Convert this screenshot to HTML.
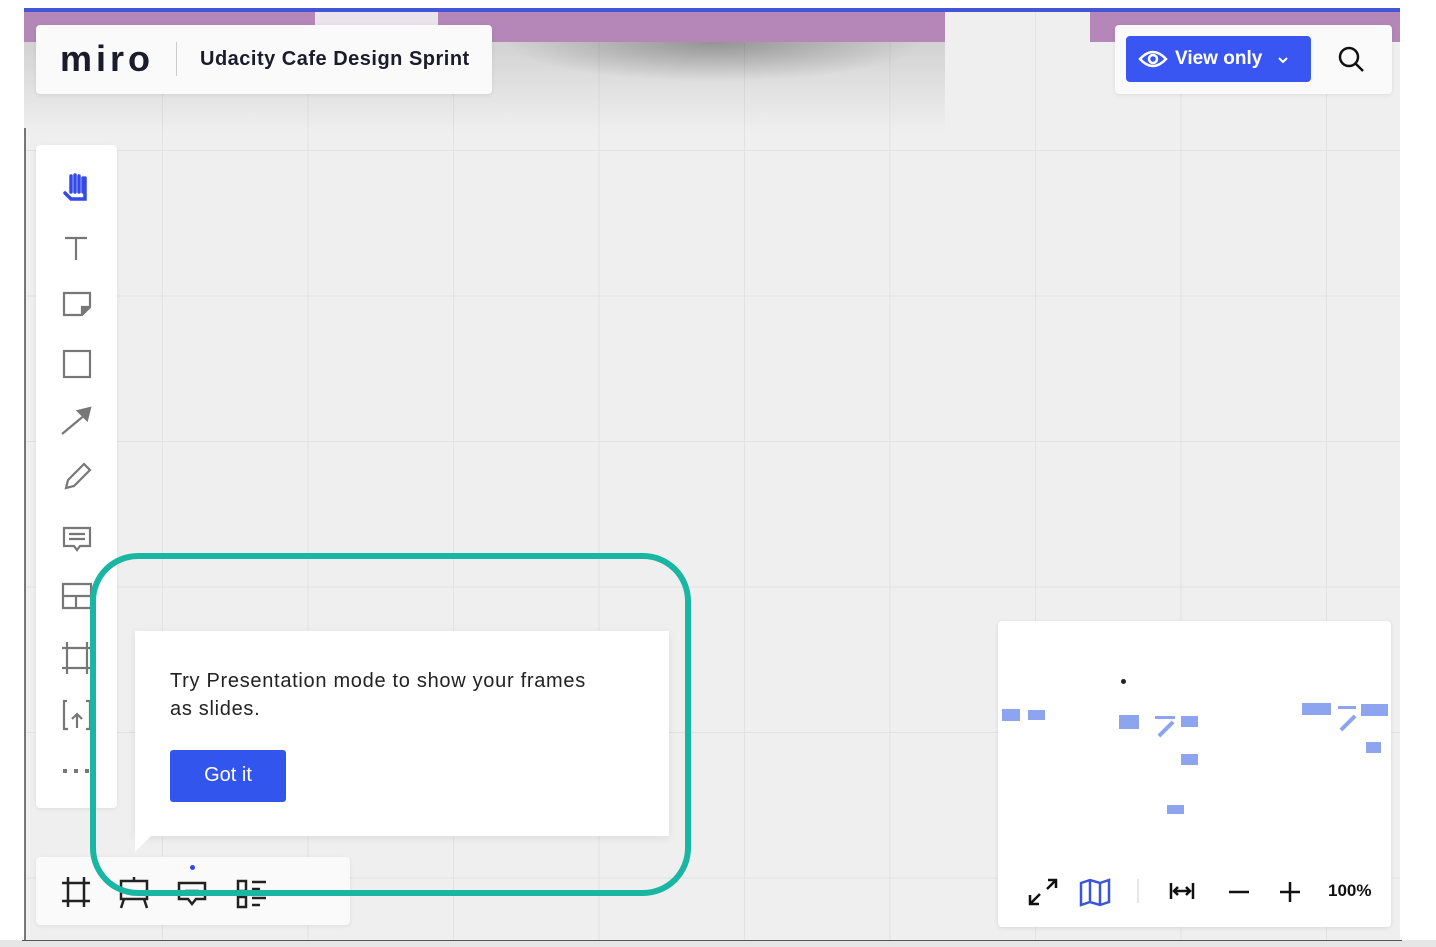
<!DOCTYPE html>
<html><head><meta charset="utf-8"><style>
*{margin:0;padding:0;box-sizing:border-box}
body{width:1436px;height:947px;position:relative;overflow:hidden;background:#fff;font-family:"Liberation Sans",sans-serif}
.abs{position:absolute}
#canvas{left:24px;top:8px;width:1376px;height:932px;background-color:#efefef;
background-image:linear-gradient(90deg,#e2e2e2 1px,transparent 1px),linear-gradient(#e2e2e2 1px,transparent 1px);
background-size:145.5px 145.5px;background-position:138px 142px;overflow:hidden}
.panel{background:#fafafa;border-radius:4px;box-shadow:0 1px 4px rgba(0,0,0,.08)}
svg{position:absolute}
</style></head><body>
<div class="abs" style="left:0;top:940px;width:1436px;height:7px;background:#e6e6e6"></div>
<div class="abs" style="left:22px;top:940px;width:1380px;height:1px;background:#555"></div>
<div id="canvas" class="abs">
  <div class="abs" style="left:0;top:34px;width:921px;height:90px;background:linear-gradient(rgba(0,0,0,.12),transparent)"></div>
  <div class="abs" style="left:0;top:0;width:1376px;height:4px;background:#4356d8"></div>
  <div class="abs" style="left:0;top:4px;width:921px;height:30px;background:#b487b8"></div>
  <div class="abs" style="left:291px;top:4px;width:123px;height:30px;background:#ebe3ec"></div>
  <div class="abs" style="left:1066px;top:4px;width:310px;height:30px;background:#b487b8"></div>
  <div class="abs" style="left:480px;top:34px;width:420px;height:40px;background:radial-gradient(ellipse at 50% 0%,rgba(0,0,0,.3),transparent 70%)"></div>
  <div class="abs" style="left:0;top:120px;width:2px;height:812px;background:#777"></div>
</div>
<!-- top left panel -->
<div class="abs panel" style="left:36px;top:25px;width:456px;height:69px"></div>
<div class="abs" style="left:60px;top:38px;font-size:36px;font-weight:bold;color:#1b1b2b;letter-spacing:4px">miro</div>
<div class="abs" style="left:176px;top:42px;width:1px;height:34px;background:#ccc"></div>
<div class="abs" style="left:200px;top:48px;font-size:20px;font-weight:bold;color:#1b1b2b;letter-spacing:0.5px">Udacity Cafe Design Sprint</div>
<!-- top right -->
<div class="abs panel" style="left:1115px;top:25px;width:277px;height:69px"></div>
<div class="abs" style="left:1126px;top:36px;width:185px;height:46px;background:#3956f2;border-radius:4px"></div>
<svg style="left:1138px;top:48px" width="30" height="22" viewBox="0 0 30 22"><path d="M2 11Q15 -3 28 11Q15 25 2 11Z" fill="none" stroke="#fff" stroke-width="2.5"/><circle cx="15" cy="11" r="4" fill="none" stroke="#fff" stroke-width="2.5"/></svg>
<div class="abs" style="left:1175px;top:48px;color:#fff;font-weight:bold;font-size:19px">View only</div>
<svg style="left:1277px;top:55px" width="12" height="10"><path d="M2 3l4 4 4-4" fill="none" stroke="#fff" stroke-width="2"/></svg>
<svg style="left:1337px;top:45px" width="30" height="30"><circle cx="12" cy="12" r="9" fill="none" stroke="#111" stroke-width="2.5"/><path d="M19 19l7 7" stroke="#111" stroke-width="2.5"/></svg>
<!-- left toolbar -->
<div class="abs panel" style="left:36px;top:145px;width:81px;height:663px;background:#fff"></div>
<svg style="left:58px;top:170px" width="40" height="620" viewBox="0 0 40 620" fill="none" stroke="#777" stroke-width="2.2">
<path d="M7 23l6 6h14v-8V8M13 22V6m4 16V5m4 17V6m4 16V8" stroke="#3349e8" stroke-width="3.5" stroke-linecap="round"/>
<path d="M7 68h22M18 68v22"/>
<path d="M6 123h26v14l-8 8H6z"/><path d="M24 145v-8h8" fill="#777"/>
<rect x="6" y="181" width="26" height="26"/>
<path d="M4 264l24-20"/><path d="M20 241l12-3-3 12z" fill="#777"/>
<path d="M8 318l2-8 16-16 6 6-16 16z"/>
<path d="M6 358h26v18H22l-3 4-3-4H6z"/><path d="M11 364h16M11 369h16"/>
<path d="M5 414h28v12H5zM5 426h28v12H5zM18 426v12"/>
<path d="M9 472v32M29 472v32M4 478h30M4 498h30"/>
<path d="M9 531h-3v28h4M28 531h4v28h-4M19 558v-14m-5 5l5-5 5 5"/>
<path d="M5 601h4M16 601h4M27 601h4" stroke-width="4"/>
</svg>
<!-- tooltip -->
<div class="abs" style="left:135px;top:631px;width:534px;height:205px;background:#fff;box-shadow:0 2px 8px rgba(0,0,0,.08)"></div>
<svg style="left:135px;top:834px" width="20" height="20"><path d="M0 0h18L0 18z" fill="#fff"/></svg>
<div class="abs" style="left:170px;top:667px;font-size:20px;line-height:28px;color:#222;letter-spacing:0.7px">Try Presentation mode to show your frames<br>as slides.</div>
<div class="abs" style="left:170px;top:750px;width:116px;height:52px;background:#3255ed;border-radius:3px;color:#fff;font-size:20px;text-align:center;line-height:50px">Got it</div>
<!-- bottom left -->
<div class="abs panel" style="left:36px;top:857px;width:314px;height:68px"></div>
<div class="abs" style="left:190px;top:865px;width:5px;height:5px;border-radius:50%;background:#3349e8"></div>
<svg style="left:58px;top:873px" width="220" height="38" fill="none" stroke="#222" stroke-width="2.5">
<path d="M10 4v30M26 4v30M4 10h28M4 28h28"/>
<path d="M63 8h26v18H63zM66 26l-3 9M86 26l3 9M76 4v4"/>
<path d="M121 10h26v16h-9l-4 5-4-5h-9zM127 18h14"/>
<path d="M180 8h8v10h-8zM180 24h8v10h-8zM194 9h14M194 16h8M194 25h14M194 32h8"/>
<path d="M250 16l4 4 4-4" stroke="#ccc" stroke-width="1.5"/>
</svg>
<!-- teal highlight -->
<div class="abs" style="left:90px;top:553px;width:601px;height:343px;border:6px solid #19b7a3;border-radius:48px"></div>
<!-- minimap -->
<div class="abs" style="left:998px;top:621px;width:393px;height:306px;background:#fff;border-radius:4px;box-shadow:0 1px 4px rgba(0,0,0,.1)"></div>
<div class="abs" style="left:1002px;top:709px;width:18px;height:12px;background:#8da4ef"></div>
<div class="abs" style="left:1028px;top:710px;width:17px;height:10px;background:#8da4ef"></div>
<div class="abs" style="left:1119px;top:715px;width:20px;height:14px;background:#8da4ef"></div>
<div class="abs" style="left:1181px;top:716px;width:17px;height:11px;background:#8da4ef"></div>
<div class="abs" style="left:1155px;top:716px;width:20px;height:3px;background:#8da4ef"></div>
<div class="abs" style="left:1156px;top:727px;width:20px;height:4px;background:#8da4ef;transform:rotate(-45deg)"></div>
<div class="abs" style="left:1181px;top:754px;width:17px;height:11px;background:#8da4ef"></div>
<div class="abs" style="left:1167px;top:805px;width:17px;height:9px;background:#8da4ef"></div>
<div class="abs" style="left:1302px;top:703px;width:29px;height:12px;background:#8da4ef"></div>
<div class="abs" style="left:1338px;top:706px;width:18px;height:3px;background:#8da4ef"></div>
<div class="abs" style="left:1361px;top:704px;width:27px;height:12px;background:#8da4ef"></div>
<div class="abs" style="left:1338px;top:721px;width:20px;height:4px;background:#8da4ef;transform:rotate(-45deg)"></div>
<div class="abs" style="left:1366px;top:742px;width:15px;height:11px;background:#8da4ef"></div>
<div class="abs" style="left:1121px;top:679px;width:5px;height:5px;background:#222;border-radius:50%"></div>
<svg style="left:1025px;top:875px" width="360" height="36" fill="none" stroke="#111" stroke-width="2.5">
<path d="M6 28l9-9M5 20v9h9M22 14l9-9M23 5h8v8"/>
<path d="M56 8l9-3 10 3 9-3v22l-9 3-10-3-9 3zM65 5v22M75 8v22" stroke="#3a55d8"/>
<path d="M113 4v24" stroke="#ccc" stroke-width="1"/>
<path d="M146 8v16M168 8v16M150 16h14M153 12l-4 4 4 4M161 12l4 4-4 4"/>
<path d="M204 17h20M255 17h20M265 7v20"/>
</svg>
<div class="abs" style="left:1328px;top:881px;font-size:17px;font-weight:bold;color:#111">100%</div>
</body></html>
